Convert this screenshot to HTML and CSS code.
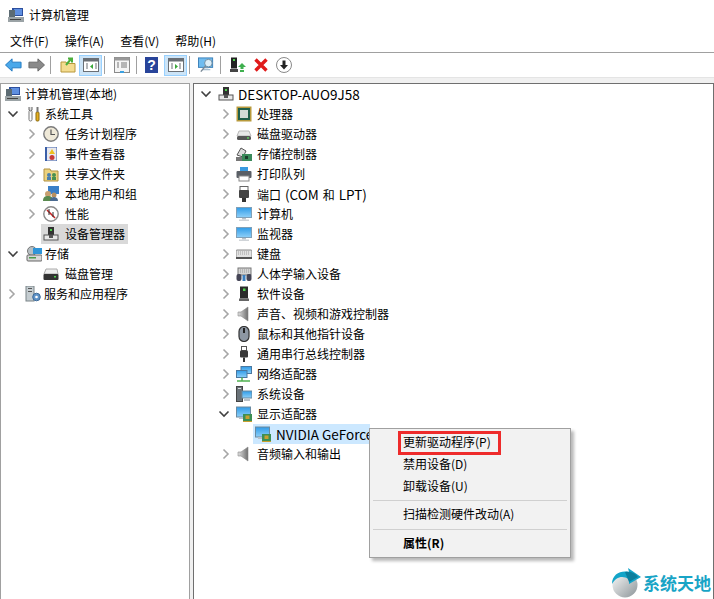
FILE: index.html
```html
<!DOCTYPE html>
<html lang="zh-CN">
<head>
<meta charset="utf-8">
<title>计算机管理</title>
<link rel="stylesheet" href="styles.css">
</head>
<body>
<svg class="defs" width="0" height="0">
<defs>
<linearGradient id="scr" x1="0" y1="0" x2="0" y2="1"><stop offset="0" stop-color="#2f9be8"/><stop offset="1" stop-color="#8fd0f8"/></linearGradient>
<linearGradient id="grey" x1="0" y1="0" x2="1" y2="0"><stop offset="0" stop-color="#e0e0e0"/><stop offset="1" stop-color="#6f6f6f"/></linearGradient>
<linearGradient id="ball" x1="0" y1="0" x2="1" y2="1"><stop offset="0" stop-color="#fafafa"/><stop offset="1" stop-color="#8b9498"/></linearGradient>
<symbol id="chev-r" viewBox="0 0 10 12"><path d="M2.500 1.500 7 6l-4.500 4.500" fill="none" stroke="#a6a6a6" stroke-width="1.600"/></symbol>
<symbol id="chev-d" viewBox="0 0 12 10"><path d="M1.500 2.500 6 7l4.500-4.500" fill="none" stroke="#404040" stroke-width="1.600"/></symbol>
<symbol id="computer" viewBox="0 0 16 16"><rect x="4" y="1" width="11" height="8" fill="#2d4f9e"/><rect x="6" y="2" width="8" height="6" fill="#5f8fe0"/><rect x="1" y="3" width="6" height="7" fill="#5c6b73"/><rect x="0" y="10" width="16" height="5" fill="#9ba3a6"/><rect x="2" y="12" width="11" height="1" fill="#444"/></symbol>
<symbol id="tools" viewBox="0 0 16 16"><rect x="3" y="4" width="3" height="11" rx="1.500" fill="#fff" stroke="#777"/><path d="M3 1v3l1.500 1L6 4V1" fill="#ddd" stroke="#666"/><rect x="10" y="6" width="3" height="9" rx="1" fill="#e6b020" stroke="#8a6a10"/><path d="M11.500 1v5" stroke="#777" stroke-width="2"/></symbol>
<symbol id="clock" viewBox="0 0 16 16"><circle cx="8" cy="8" r="7.200" fill="#efe9d8" stroke="#7b7b7b" stroke-width="1.400"/><path d="M8 3.500V8.500H12" fill="none" stroke="#555" stroke-width="1.200"/></symbol>
<symbol id="event" viewBox="0 0 16 16"><rect x="2" y="1" width="12" height="14" fill="#3a5fa8"/><rect x="4" y="1.500" width="9.500" height="13" fill="#e8e8ee"/><path d="M9 3l3 5H6z" fill="#edc020"/><circle cx="9" cy="11.500" r="2.500" fill="#c83a3a"/></symbol>
<symbol id="share" viewBox="0 0 16 16"><path d="M1 3h6l1 2h7v10H1z" fill="#ecd27e" stroke="#b09040"/><circle cx="6" cy="9" r="2" fill="#4a80b0"/><circle cx="11" cy="9" r="2" fill="#4a9050"/><rect x="4" y="11" width="4" height="3" fill="#4a80b0"/><rect x="9" y="11" width="4" height="3" fill="#4a9050"/></symbol>
<symbol id="users" viewBox="0 0 16 16"><rect x="5" y="0" width="11" height="8" fill="#3a7fc8"/><circle cx="5" cy="8" r="3" fill="#c8a070"/><path d="M0 15c0-4 2-5 5-5s5 1 5 5z" fill="#5a8a50"/><circle cx="11" cy="9" r="2.500" fill="#b89060"/><path d="M7 15c0-3 2-4 4-4s4 1 4 4z" fill="#4a6a90"/></symbol>
<symbol id="perf" viewBox="0 0 16 16"><circle cx="8" cy="8" r="7.200" fill="#fff" stroke="#8a8a8a" stroke-width="1.400"/><path d="M4 4l5 5 3 3" stroke="#c82020" stroke-width="1.600"/><path d="M6 3v6M10 6v5" stroke="#333" stroke-width="1"/></symbol>
<symbol id="devmgr" viewBox="0 0 16 16"><rect x="5" y="1" width="6" height="8" fill="#333"/><rect x="7" y="3" width="2" height="2" fill="#4fd24f"/><rect x="1" y="9" width="14" height="5" fill="#e8e8e8" stroke="#555"/><rect x="6" y="9" width="4" height="3" fill="#555"/></symbol>
<symbol id="storage" viewBox="0 0 16 16"><circle cx="6" cy="5" r="4.500" fill="#b8c0c4" stroke="#777"/><rect x="7" y="2" width="9" height="6" fill="#2f95d8"/><rect x="1" y="9" width="15" height="6" rx="1" fill="#d8d8d8" stroke="#666"/><rect x="3" y="11" width="7" height="1.500" fill="#4a9a4a"/></symbol>
<symbol id="disk" viewBox="0 0 16 16"><path d="M3 3h11l1 5H1z" fill="#eee" stroke="#aaa"/><rect x="0.500" y="8" width="15" height="6" rx="1" fill="#333"/><rect x="11" y="10" width="2" height="1.500" fill="#4fd24f"/></symbol>
<symbol id="service" viewBox="0 0 16 16"><rect x="1" y="0" width="8" height="15" fill="#c4ccd0" stroke="#7a8488"/><rect x="3" y="2" width="4" height="1" fill="#555"/><rect x="3" y="5" width="4" height="1" fill="#555"/><circle cx="11.500" cy="11" r="3.800" fill="#5f93c8" stroke="#3c6a98"/><circle cx="11.500" cy="11" r="1.300" fill="#fff"/></symbol>
<symbol id="cpu" viewBox="0 0 16 16"><rect x="0.500" y="0.500" width="15" height="15" fill="#b89a3c"/><rect x="2" y="2" width="12" height="12" fill="#1f5f4a"/><rect x="4" y="4" width="8" height="8" fill="#d2dcd6"/></symbol>
<symbol id="hdd" viewBox="0 0 16 16"><path d="M3 5h10l2 5H1z" fill="#e8e8e8" stroke="#b8b8b8"/><rect x="1" y="10" width="14" height="4" rx="1.500" fill="#555"/><rect x="11" y="11.300" width="2" height="1.300" fill="#5fe05f"/></symbol>
<symbol id="stctl" viewBox="0 0 16 16"><path d="M1 9 5 2l5 3-3 6z" fill="#ddd" stroke="#555"/><rect x="0" y="11" width="9" height="4" fill="#777"/><rect x="6" y="8" width="10" height="7" fill="#3a8a5a"/><rect x="9" y="10" width="3" height="3" fill="#1c3c2c"/></symbol>
<symbol id="printer" viewBox="0 0 16 16"><rect x="4" y="1" width="8" height="5" fill="#3a9ae0"/><rect x="0.500" y="5" width="15" height="7" rx="1" fill="#5a5f66"/><rect x="3" y="10" width="10" height="5" fill="#fff" stroke="#888"/></symbol>
<symbol id="port" viewBox="0 0 16 16"><rect x="4" y="0.500" width="8" height="4" fill="#fff" stroke="#666"/><rect x="3" y="4" width="10" height="8" rx="1" fill="#444"/><rect x="6" y="12" width="4" height="4" fill="#333"/></symbol>
<symbol id="monitor" viewBox="0 0 16 16"><rect x="0.500" y="1.500" width="15" height="10" fill="url(#scr)" stroke="#7fa0b8"/><rect x="6" y="12" width="4" height="1.500" fill="#b8c0c8"/><rect x="3" y="13.500" width="10" height="1.500" fill="#d0d4d8"/></symbol>
<symbol id="keyboard" viewBox="0 0 16 16"><rect x="0" y="4" width="16" height="8" rx="1" fill="#e2e2e2" stroke="#888"/><path d="M2 6h12M2 8h12" stroke="#a0a0a0" stroke-dasharray="1 1"/><rect x="0" y="11" width="16" height="2" fill="#555"/></symbol>
<symbol id="hid" viewBox="0 0 16 16"><rect x="2" y="2" width="13" height="7" fill="#d4d4d4" stroke="#777"/><path d="M4 4h9M4 6h9" stroke="#999" stroke-dasharray="1 1"/><rect x="0.500" y="8" width="5" height="7" rx="2" fill="#445"/><rect x="10.500" y="8" width="5" height="7" rx="2" fill="#445"/><rect x="6.500" y="9" width="3" height="6" fill="#3a7fc0"/></symbol>
<symbol id="soft" viewBox="0 0 16 16"><rect x="4" y="0.500" width="8" height="12" fill="#2a2a2a"/><rect x="7" y="2.500" width="2.500" height="2.500" fill="#4fd24f"/><rect x="3" y="12.500" width="10" height="2.500" fill="#666"/></symbol>
<symbol id="speaker" viewBox="0 0 16 16"><path d="M2 6h3l7-5v14l-7-5H2z" fill="url(#grey)" stroke="#8a8a8a" stroke-width=".6"/></symbol>
<symbol id="mouse" viewBox="0 0 16 16"><rect x="3" y="0.500" width="10" height="15" rx="5" fill="#8d97a3" stroke="#333" stroke-width="1.200"/><rect x="7" y="2" width="2" height="5" fill="#222"/></symbol>
<symbol id="usb" viewBox="0 0 16 16"><rect x="5.500" y="0.500" width="5" height="4" fill="#fff" stroke="#555"/><rect x="4" y="4.500" width="8" height="7" rx="1" fill="#3a3a3a"/><rect x="7" y="11.500" width="2" height="4.500" fill="#333"/></symbol>
<symbol id="network" viewBox="0 0 16 16"><rect x="5" y="0.500" width="10.500" height="7" fill="url(#scr)" stroke="#4a78a0"/><rect x="0.500" y="4.500" width="10.500" height="7" fill="url(#scr)" stroke="#4a78a0"/><path d="M1 15h13" stroke="#4fb04f" stroke-width="1.500"/><path d="M6 11.500V15" stroke="#4fb04f" stroke-width="1.500"/></symbol>
<symbol id="sys" viewBox="0 0 16 16"><rect x="0.500" y="0.500" width="6" height="15" fill="#6a7278" stroke="#444"/><rect x="2" y="2" width="3" height="1" fill="#ddd"/><rect x="6" y="5" width="10" height="7" fill="url(#scr)" stroke="#6a8aa0"/><rect x="8" y="13" width="6" height="2" fill="#b8c0c8"/></symbol>
<symbol id="display" viewBox="0 0 16 16"><rect x="0.500" y="1" width="14" height="10" fill="url(#scr)" stroke="#6a8aa0"/><rect x="3" y="11" width="8" height="2" fill="#b8c0c8"/><rect x="7" y="8" width="9" height="7" fill="#3c8f54"/><rect x="9.500" y="9.500" width="4" height="3.500" fill="#c8a030"/><path d="M7 15.500h9" stroke="#c8a030"/></symbol>
</defs>
</svg>

<div class="window">
  <header class="titlebar">
    <svg class="ic"><use href="#computer"/></svg>
    <span>计算机管理</span>
  </header>
  <nav class="menubar">
    <span>文件(F)</span><span>操作(A)</span><span>查看(V)</span><span>帮助(H)</span>
  </nav>
  <div class="toolbar">
    <span class="tb"><svg width="17" height="14" viewBox="0 0 18 14"><path d="M0.500 7 7.500 0.500V4H17v6H7.500v3.500z" fill="#4aa8ea" stroke="#1f78c0"/></svg></span>
    <span class="tb"><svg width="17" height="14" viewBox="0 0 18 14"><path d="M17.500 7 10.500 0.500V4H1v6h9.500v3.500z" fill="#8a8a8a" stroke="#666"/></svg></span>
    <i class="sep"></i>
    <span class="tb"><svg width="16" height="16" viewBox="0 0 16 16"><path d="M1 5h5l1 1.500h8V15H1z" fill="#f4dc90" stroke="#b8983c"/><path d="M6 8 11 2M8 1.500h4v4" fill="none" stroke="#4caf3c" stroke-width="2"/></svg></span>
    <span class="tb on"><svg width="16" height="14" viewBox="0 0 16 14"><rect x="0.500" y="0.500" width="15" height="13" fill="#fff" stroke="#6a6f75"/><rect x="0.500" y="0.500" width="15" height="3" fill="#6a6f75"/><path d="M3 6h2M3 8h2M3 10h2M12 6h2M12 8h2M12 10h2" stroke="#6a6f75"/><path d="M10 6v5L7 8.500z" fill="#3aa83a"/></svg></span>
    <i class="sep"></i>
    <span class="tb"><svg width="16" height="16" viewBox="0 0 16 16"><rect x="0.500" y="0.500" width="15" height="15" fill="#f4f4f4" stroke="#8a8a8a"/><rect x="0.500" y="0.500" width="15" height="3" fill="#999"/><path d="M3 6h2M3 8h2M3 10h2M7 6h6M7 8h6M7 10h6" stroke="#777"/><rect x="6" y="14" width="4" height="2" fill="#3aa0e0"/></svg></span>
    <i class="sep mid"></i>
    <span class="tb help"><svg width="13" height="16" viewBox="0 0 13 16"><rect width="13" height="16" fill="#28449a"/><text x="6.500" y="13" class="qm">?</text></svg></span>
    <span class="tb on"><svg width="16" height="14" viewBox="0 0 16 14"><rect x="0.500" y="0.500" width="15" height="13" fill="#fff" stroke="#6a6f75"/><rect x="0.500" y="0.500" width="15" height="3" fill="#6a6f75"/><path d="M3 6h2M3 8h2M3 10h2M11 6h2M11 8h2M11 10h2" stroke="#6a6f75"/><path d="M7 6v5l3-2.500z" fill="#3aa83a"/></svg></span>
    <i class="sep"></i>
    <span class="tb"><svg width="17" height="16" viewBox="0 0 18 16"><rect x="0.500" y="0.500" width="15" height="10" fill="#6fbcf0" stroke="#3a7fb8"/><path d="M5 13h8M7 11h4" stroke="#8aa8c0"/><circle cx="11" cy="6" r="4" fill="#dceef8" stroke="#6a8aa0"/><path d="M8 9 3 15" stroke="#7a8a98" stroke-width="1.500"/></svg></span>
    <i class="sep"></i>
    <span class="tb"><svg width="16" height="16" viewBox="0 0 16 16"><rect x="1" y="0.500" width="6" height="11" fill="#222"/><rect x="3" y="2" width="2" height="2" fill="#4fd24f"/><rect x="0" y="12" width="8" height="3" fill="#444"/><path d="M12 6l4 4h-2.500v2H10.500v-2H8z" fill="#3fb04f"/><rect x="10" y="13" width="4" height="2" fill="#3fb04f"/></svg></span>
    <span class="tb"><svg width="14" height="14" viewBox="0 0 14 14"><path d="M1.500 1.500l11 11M12.500 1.500l-11 11" stroke="#e01a1a" stroke-width="3.400"/></svg></span>
    <span class="tb"><svg width="16" height="16" viewBox="0 0 16 16"><circle cx="8" cy="8" r="7.500" fill="#fff" stroke="#8a8a8a"/><path d="M6.500 3.500h3V8H12l-4 4.500L4 8h2.500z" fill="#222"/></svg></span>
  </div>

  <main class="panes">
    <section class="pane left">
      <div class="row l0"><svg class="ic"><use href="#computer"/></svg><span>计算机管理(本地)</span></div>
      <div class="row l1"><svg class="cv"><use href="#chev-d"/></svg><svg class="ic"><use href="#tools"/></svg><span>系统工具</span></div>
      <div class="row l2"><svg class="cr"><use href="#chev-r"/></svg><svg class="ic"><use href="#clock"/></svg><span>任务计划程序</span></div>
      <div class="row l2"><svg class="cr"><use href="#chev-r"/></svg><svg class="ic"><use href="#event"/></svg><span>事件查看器</span></div>
      <div class="row l2"><svg class="cr"><use href="#chev-r"/></svg><svg class="ic"><use href="#share"/></svg><span>共享文件夹</span></div>
      <div class="row l2"><svg class="cr"><use href="#chev-r"/></svg><svg class="ic"><use href="#users"/></svg><span>本地用户和组</span></div>
      <div class="row l2"><svg class="cr"><use href="#chev-r"/></svg><svg class="ic"><use href="#perf"/></svg><span>性能</span></div>
      <div class="row l2 noexp"><span class="sel"><svg class="ic"><use href="#devmgr"/></svg><span>设备管理器</span></span></div>
      <div class="row l1"><svg class="cv"><use href="#chev-d"/></svg><svg class="ic"><use href="#storage"/></svg><span>存储</span></div>
      <div class="row l2 noexp2"><svg class="ic"><use href="#disk"/></svg><span>磁盘管理</span></div>
      <div class="row l1"><svg class="cr"><use href="#chev-r"/></svg><svg class="ic"><use href="#service"/></svg><span>服务和应用程序</span></div>
    </section>
    <section class="pane right">
      <div class="row r0"><svg class="cv"><use href="#chev-d"/></svg><svg class="ic"><use href="#devmgr"/></svg><span class="lat">DESKTOP-AUO9J58</span></div>
      <div class="row r1"><svg class="cr"><use href="#chev-r"/></svg><svg class="ic"><use href="#cpu"/></svg><span>处理器</span></div>
      <div class="row r1"><svg class="cr"><use href="#chev-r"/></svg><svg class="ic"><use href="#hdd"/></svg><span>磁盘驱动器</span></div>
      <div class="row r1"><svg class="cr"><use href="#chev-r"/></svg><svg class="ic"><use href="#stctl"/></svg><span>存储控制器</span></div>
      <div class="row r1"><svg class="cr"><use href="#chev-r"/></svg><svg class="ic"><use href="#printer"/></svg><span>打印队列</span></div>
      <div class="row r1"><svg class="cr"><use href="#chev-r"/></svg><svg class="ic"><use href="#port"/></svg><span class="port">端口 <span class="lat">(COM</span> 和 <span class="lat">LPT)</span></span></div>
      <div class="row r1"><svg class="cr"><use href="#chev-r"/></svg><svg class="ic"><use href="#monitor"/></svg><span>计算机</span></div>
      <div class="row r1"><svg class="cr"><use href="#chev-r"/></svg><svg class="ic"><use href="#monitor"/></svg><span>监视器</span></div>
      <div class="row r1"><svg class="cr"><use href="#chev-r"/></svg><svg class="ic"><use href="#keyboard"/></svg><span>键盘</span></div>
      <div class="row r1"><svg class="cr"><use href="#chev-r"/></svg><svg class="ic"><use href="#hid"/></svg><span>人体学输入设备</span></div>
      <div class="row r1"><svg class="cr"><use href="#chev-r"/></svg><svg class="ic"><use href="#soft"/></svg><span>软件设备</span></div>
      <div class="row r1"><svg class="cr"><use href="#chev-r"/></svg><svg class="ic"><use href="#speaker"/></svg><span>声音、视频和游戏控制器</span></div>
      <div class="row r1"><svg class="cr"><use href="#chev-r"/></svg><svg class="ic"><use href="#mouse"/></svg><span>鼠标和其他指针设备</span></div>
      <div class="row r1"><svg class="cr"><use href="#chev-r"/></svg><svg class="ic"><use href="#usb"/></svg><span>通用串行总线控制器</span></div>
      <div class="row r1"><svg class="cr"><use href="#chev-r"/></svg><svg class="ic"><use href="#network"/></svg><span>网络适配器</span></div>
      <div class="row r1"><svg class="cr"><use href="#chev-r"/></svg><svg class="ic"><use href="#sys"/></svg><span>系统设备</span></div>
      <div class="row r1"><svg class="cv"><use href="#chev-d"/></svg><svg class="ic"><use href="#display"/></svg><span>显示适配器</span></div>
      <div class="row r2"><span class="hl"><svg class="ic"><use href="#display"/></svg><span class="lat">NVIDIA GeForce</span></span></div>
      <div class="row r1"><svg class="cr"><use href="#chev-r"/></svg><svg class="ic"><use href="#speaker"/></svg><span>音频输入和输出</span></div>
    </section>
  </main>

  <div class="ctx">
    <div class="it">更新驱动程序(P)</div>
    <div class="it">禁用设备(D)</div>
    <div class="it">卸载设备(U)</div>
    <hr>
    <div class="it">扫描检测硬件改动(A)</div>
    <hr>
    <div class="it bold">属性(R)</div>
  </div>
  <div class="redbox"></div>

  <div class="mark">
    <svg width="31" height="30" viewBox="0 0 31 30"><circle cx="15" cy="17" r="12.500" fill="url(#ball)"/><path d="M2 16C2 6 11 2 19 4l-1-4 13 9-12 7 0-5C12 7 6 9 2 16z" fill="#12a4c8"/><path d="M15 4c6-1 10 1 13 5l-9 5z" fill="#0b7f9e"/></svg>
    <span>系统天地</span>
  </div>
</div>
</body>
</html>
```
FILE: styles.css
```css
* { box-sizing: border-box; }
html, body { margin: 0; padding: 0; }
body {
  width: 714px;
  height: 599px;
  overflow: hidden;
  background: #fff;
  font: 12px/20px "Noto Sans CJK SC", "Noto Sans", sans-serif;
  color: #000;
}
.defs { position: absolute; }
.window { position: relative; width: 714px; height: 599px; display: flex; flex-direction: column; }

.titlebar { height: 29px; display: flex; align-items: center; gap: 5px; padding-left: 8px; }
.menubar { height: 24px; display: flex; align-items: center; gap: 16px; padding-left: 10px; border-bottom: 1px solid #a0a0a0; }

.toolbar { height: 25px; display: flex; align-items: center; padding-left: 2px; background: #fff; border-bottom: 1px solid #e4e4e4; }
.tb { width: 23px; height: 21px; display: flex; align-items: center; justify-content: center; }
.tb.on { background: #cce4f7; border: 1px solid #99d1ff; }
.tb svg { display: block; }
.help { margin-right: 1px; }
.sep { width: 1px; height: 18px; background: #a0a0a0; margin: 0 5px 0 2px; }
.sep.mid { margin: 0 3px 0 3px; }
.qm { font: bold 14px "Liberation Sans", sans-serif; fill: #fff; text-anchor: middle; }

.panes { flex: 1; display: flex; gap: 3px; background: #f0f0f0; padding-top: 5px; min-height: 0; }
.pane { background: #fff; border: 1px solid #a0a0a0; border-width: 1px 1px 0 1px; }
.left { width: 190px; }
.right { flex: 1; border-color: #6f6f6f; }

.row { height: 20px; display: flex; align-items: center; white-space: nowrap; }
.ic { width: 16px; height: 16px; flex: none; }
.cr { width: 10px; height: 12px; flex: none; }
.cv { width: 12px; height: 10px; flex: none; }

.l0 { padding-left: 4px; gap: 4px; }
.l1 { padding-left: 6px; }
.l1 .cv { margin-right: 7px; }
.l1 .cr { margin-right: 8px; }
.l1 .ic { margin-right: 3px; }
.l2 { padding-left: 26px; }
.l2 .cr { margin-right: 6px; }
.l2 .ic { margin-right: 6px; }
.noexp { padding-left: 40px; }
.noexp2 { padding-left: 42px; }
.sel { display: flex; align-items: center; height: 20px; width: 87px; background: #d9d9d9; padding-left: 2px; }

.lat { font-size: 13.5px; }
.port { display: inline-flex; gap: 4px; align-items: baseline; }
.r0 { padding-left: 6px; }
.r0 .cv { margin-right: 6px; }
.r0 .ic { margin-right: 4px; }
.r1 { padding-left: 27px; }
.r1 .cr { margin-right: 5px; }
.r1 .ic { margin-right: 5px; }
.r1 .cv { margin: 0 6px 0 -3px; }
.r2 { padding-left: 59px; }
.hl { display: flex; align-items: center; height: 20px; width: 117px; background: #cce8ff; padding-left: 2px; }
.hl .ic { margin-right: 5px; }

.ctx {
  position: absolute;
  left: 369px;
  top: 428px;
  width: 202px;
  height: 130px;
  background: #f2f2f2;
  border: 1px solid #a0a0a0;
  box-shadow: 3px 3px 3px rgba(0,0,0,.28);
  padding-top: 2px;
}
.it { height: 22px; line-height: 22px; padding-left: 33px; }
.ctx hr { border: 0; height: 1px; background: #d0d0d0; margin: 3px 3px 2px; }
.ctx .it + hr + .it + hr { margin-top: 4px; }
.bold { font-weight: 700; }
.redbox { position: absolute; left: 398px; top: 431px; width: 103px; height: 24px; border: 3px solid #ee2b2b; }

.mark { position: absolute; left: 610px; top: 568px; display: flex; align-items: center; gap: 2px; color: #18a4c6; font-size: 17px; font-weight: 700; }
```
